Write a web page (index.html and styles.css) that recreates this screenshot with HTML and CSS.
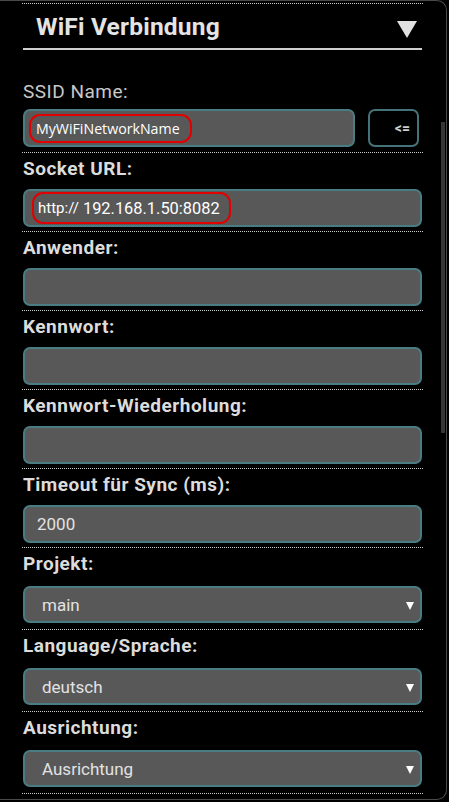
FILE: index.html
```html
<!DOCTYPE html>
<html lang="de">
<head>
<meta charset="utf-8">
<title>WiFi Verbindung</title>
<link rel="stylesheet" href="styles.css">
</head>
<body>
<div class="panel">
  <div class="scrollbar"></div>
  <div class="content">
    <div class="sep sep-top"></div>
    <div class="header">
      <span class="title">WiFi Verbindung</span>
      <svg class="caret" width="20" height="17" viewBox="0 0 20 17"><polygon points="0,0 20,0 10,17" fill="#e2e2e2"/></svg>
    </div>

    <div class="field field-ssid">
      <div class="label label-light">SSID Name:</div>
      <div class="ssid-row">
        <div class="input"><span class="pill pill-ssid">MyWiFiNetworkName</span></div>
        <div class="btn">&lt;=</div>
      </div>
    </div>
    <div class="sep"></div>

    <div class="field">
      <div class="label">Socket URL:</div>
      <div class="input"><span class="pill pill-url"><span class="proto">http://</span> 192.168.1.50:8082</span></div>
    </div>
    <div class="sep"></div>

    <div class="field">
      <div class="label">Anwender:</div>
      <div class="input"></div>
    </div>
    <div class="sep"></div>

    <div class="field">
      <div class="label">Kennwort:</div>
      <div class="input"></div>
    </div>
    <div class="sep"></div>

    <div class="field">
      <div class="label">Kennwort-Wiederholung:</div>
      <div class="input"></div>
    </div>
    <div class="sep"></div>

    <div class="field">
      <div class="label">Timeout für Sync (ms):</div>
      <div class="input"><span class="value">2000</span></div>
    </div>
    <div class="sep"></div>

    <div class="field field-select">
      <div class="label">Projekt:</div>
      <div class="input select"><span class="value">main</span><span class="arrow"></span></div>
    </div>
    <div class="sep"></div>

    <div class="field field-select">
      <div class="label">Language/Sprache:</div>
      <div class="input select"><span class="value">deutsch</span><span class="arrow"></span></div>
    </div>
    <div class="sep"></div>

    <div class="field field-select">
      <div class="label">Ausrichtung:</div>
      <div class="input select"><span class="value">Ausrichtung</span><span class="arrow"></span></div>
    </div>
    <div class="sep"></div>

    <div class="field">
      <div class="label">Einstellungen speichern:</div>
    </div>
  </div>
</div>
</body>
</html>
```
FILE: styles.css
```css
html, body {
  margin: 0;
  padding: 0;
  background: #000;
  overflow: hidden;
  height: 802px;
}

body {
  font-family: Roboto, "Liberation Sans", sans-serif;
  color: #e0e0e0;
}

.panel {
  position: relative;
  width: 447px;
  height: 800px;
  box-sizing: border-box;
  border-top: 1px solid #4a4a4a;
  border-right: 1px solid #4a4a4a;
  border-bottom: 1px solid #4a4a4a;
  border-radius: 0 10px 10px 0;
  overflow: hidden;
}

.scrollbar {
  position: absolute;
  right: 1px;
  top: 121px;
  width: 4px;
  height: 311px;
  background: #363636;
}

.content {
  margin-left: 23px;
  width: 399px;
}

.sep {
  border-top: 1px dotted #d0d0d0;
  margin-left: -1px;
  width: 401px;
}

.sep-top {
  margin-top: 2px;
}

.header {
  display: flex;
  align-items: flex-start;
  justify-content: space-between;
  padding: 8px 5px 6px 13px;
  border-bottom: 2px solid #cfcfcf;
}

.title {
  font-size: 24.5px;
  line-height: 30px;
  font-weight: 700;
  color: #e4e4e4;
  letter-spacing: 0.2px;
}

.caret {
  margin-top: 9px;
}

.field {
  display: flex;
  flex-direction: column;
}

.label {
  font-size: 19px;
  line-height: 20px;
  font-weight: 700;
  letter-spacing: 0.5px;
  color: #dcdcdc;
  margin: 6px 0 10px;
}

.label-light {
  font-weight: 400;
  font-size: 19px;
  line-height: 22px;
  letter-spacing: 0.5px;
  color: #c8c8c8;
  margin: 31px 0 6px;
}

.field-ssid {
  margin-bottom: 5px;
}

.field-select .label {
  margin: 6px 0 12px;
}

.field-select {
  margin-bottom: 6px;
}

.field:not(.field-select):not(.field-ssid) {
  margin-bottom: 4px;
}

.ssid-row {
  display: flex;
  gap: 13px;
  padding-right: 3px;
}

.ssid-row .input {
  flex: 1;
}

.input {
  box-sizing: border-box;
  height: 38px;
  background: #585858;
  border: 2px solid #4a7c84;
  border-radius: 7px;
  display: flex;
  align-items: center;
  padding-left: 2px;
}

.select {
  height: 37px;
  padding: 0 6px 0 17px;
  justify-content: space-between;
}

.value {
  font-size: 17px;
  color: #e2e2e2;
}

.input > .value {
  padding-left: 10px;
}

.select > .value {
  padding-left: 0;
}

.arrow {
  width: 0;
  height: 0;
  border-left: 4px solid transparent;
  border-right: 4px solid transparent;
  border-top: 8px solid #ffffff;
  margin-top: 2px;
}

.btn {
  box-sizing: border-box;
  width: 51px;
  height: 38px;
  border: 2px solid #44737a;
  border-radius: 7px;
  background: #000;
  color: #cfcfcf;
  font-size: 14px;
  font-weight: 700;
  display: flex;
  align-items: center;
  justify-content: flex-end;
  padding-right: 7px;
}

.pill {
  box-sizing: border-box;
  border: 2px solid #e00000;
  border-radius: 11px;
  display: inline-flex;
  align-items: center;
  color: #fff;
}

.pill-ssid {
  height: 29px;
  margin-left: 2px;
  padding: 0 10px 0 5px;
  font-family: "Open Sans", "Noto Sans", sans-serif;
  font-size: 14.2px;
}

.pill-url {
  height: 32px;
  margin-left: 5px;
  padding: 0 9px 0 4px;
  font-size: 16.4px;
  white-space: pre;
}

.proto {
  font-size: 15px;
}
```
